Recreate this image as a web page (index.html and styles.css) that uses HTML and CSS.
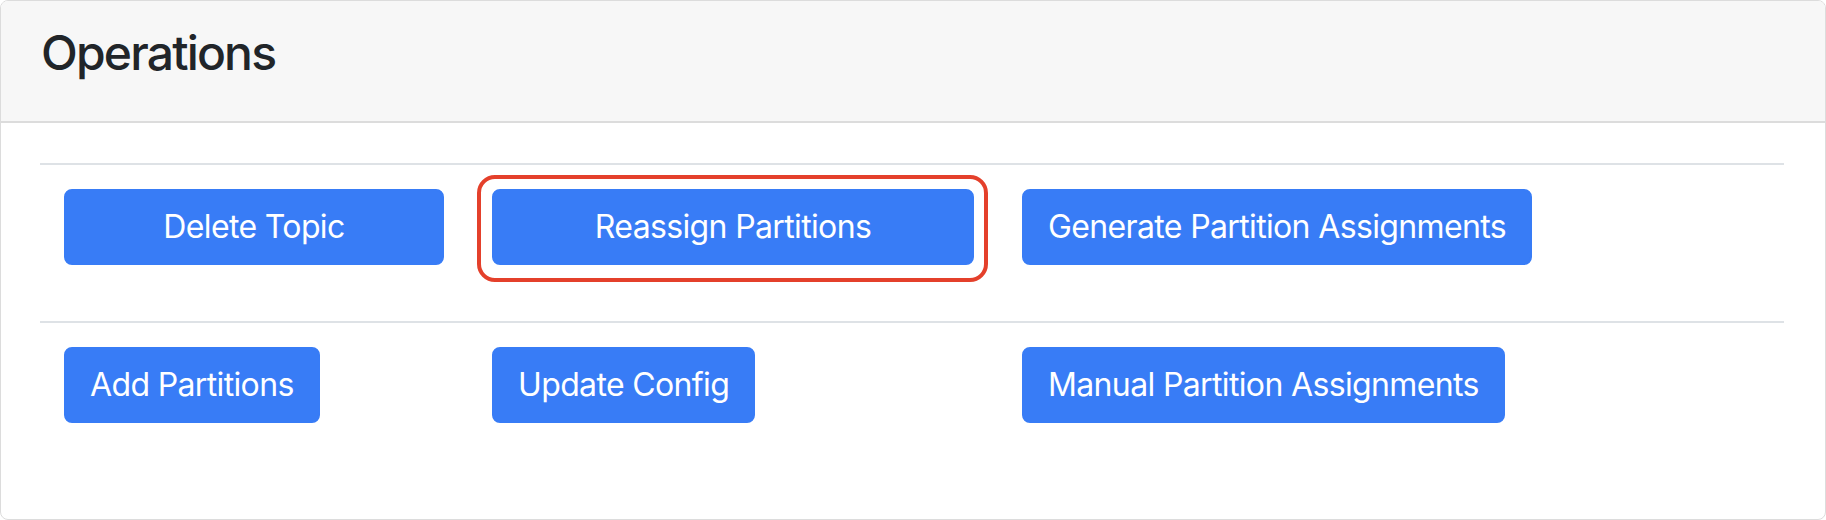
FILE: index.html
```html
<!DOCTYPE html>
<html lang="en">
<head>
<meta charset="utf-8">
<title>Operations</title>
<link rel="stylesheet" href="styles.css">
</head>
<body>
<div class="card">
  <div class="card-header">
    <h4 class="card-title">Operations</h4>
  </div>
  <div class="card-body">
    <div class="ops-row">
      <div class="ops-cell">
        <form class="ops-form"><button type="button" class="btn btn-block">Delete Topic</button></form>
      </div>
      <div class="ops-cell">
        <form class="ops-form highlighted">
          <button type="button" class="btn btn-block">Reassign Partitions</button>
          <span class="highlight-ring"></span>
        </form>
      </div>
      <div class="ops-cell">
        <form class="ops-form"><button type="button" class="btn">Generate Partition Assignments</button></form>
      </div>
    </div>
    <div class="ops-row">
      <div class="ops-cell">
        <form class="ops-form"><button type="button" class="btn">Add Partitions</button></form>
      </div>
      <div class="ops-cell">
        <form class="ops-form"><button type="button" class="btn">Update Config</button></form>
      </div>
      <div class="ops-cell">
        <form class="ops-form"><button type="button" class="btn">Manual Partition Assignments</button></form>
      </div>
    </div>
  </div>
</div>
</body>
</html>
```

FILE: styles.css
```css
* {
  box-sizing: border-box;
}

html, body {
  margin: 0;
  padding: 0;
  background: #ffffff;
}

body {
  font-family: Inter, "Noto Sans", "Liberation Sans", sans-serif;
  color: #212529;
}

.card {
  width: 1826px;
  height: 520px;
  border: 1px solid #dcdcdc;
  border-radius: 8px;
  overflow: hidden;
  background: #ffffff;
}

.card-header {
  background: #f7f7f7;
  border-bottom: 2px solid #dcdcdc;
  padding: 23px 40px 23px 40px;
}

.card-title {
  margin: 0 0 16px 0;
  font-size: 48px;
  line-height: 58px;
  font-weight: 500;
  letter-spacing: -0.038em;
  color: #212529;
}

.card-body {
  padding: 40px 41px 40px 39px;
}

.ops-row {
  display: grid;
  grid-template-columns: 428px 530px 1fr;
  border-top: 2px solid #dee2e6;
}

.ops-cell {
  padding: 24px;
}

.ops-form {
  margin: 0 0 32px 0;
}

.highlighted {
  position: relative;
}

.highlight-ring {
  position: absolute;
  top: -14px;
  left: -15px;
  right: -14px;
  bottom: -17px;
  border: 4px solid #e4402b;
  border-radius: 18px;
  pointer-events: none;
}

.btn {
  display: inline-block;
  font-family: Inter, "Noto Sans", "Liberation Sans", sans-serif;
  font-size: 32px;
  line-height: 48px;
  font-weight: 400;
  letter-spacing: -0.02em;
  color: #ffffff;
  background: #387cf6;
  border: 2px solid #387cf6;
  border-radius: 8px;
  padding: 12px 24px;
  text-align: center;
  white-space: nowrap;
  cursor: pointer;
}

.btn-block {
  display: block;
  width: 100%;
}
```
